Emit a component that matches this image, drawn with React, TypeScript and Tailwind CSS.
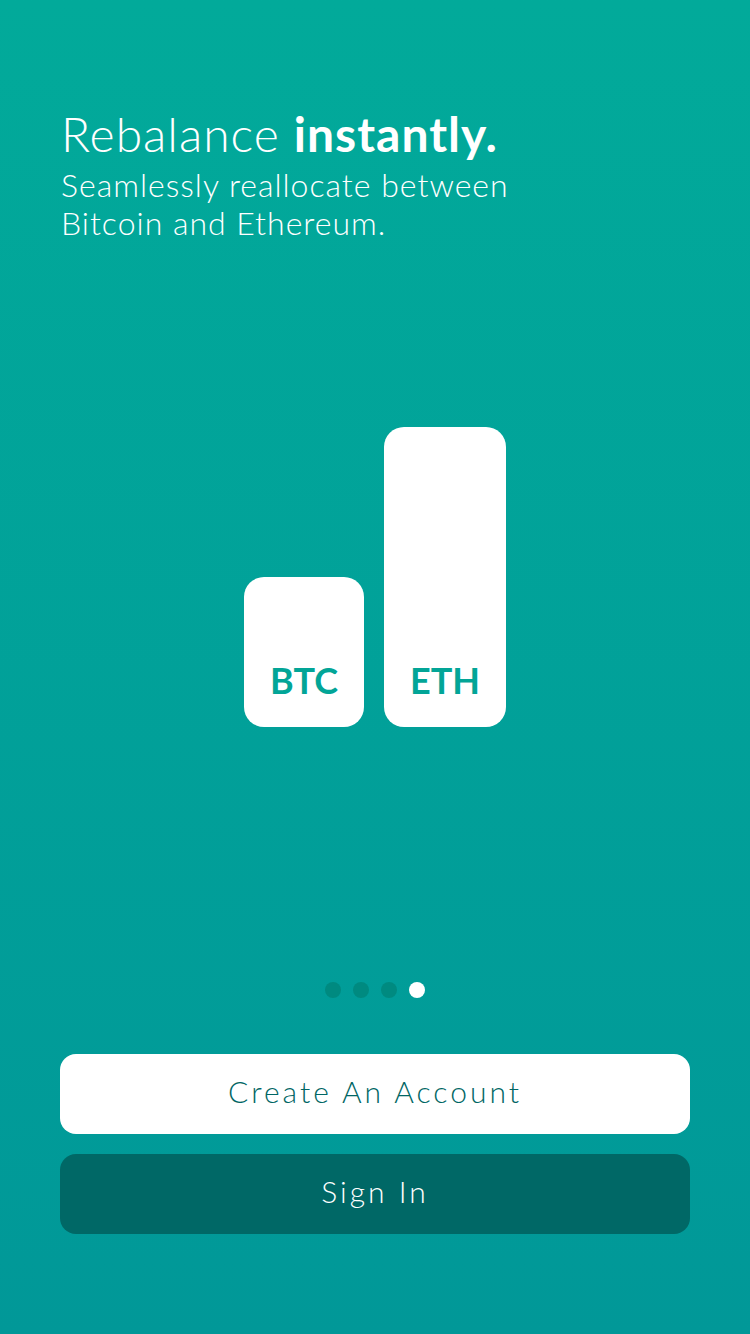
import React from "react";

const font = { fontFamily: "Lato, 'Noto Sans', sans-serif" };

function Bar(props: { label: string; height: string; width: string }) {
    return (
        <div
            className={`flex items-end justify-center rounded-[20px] bg-white pb-[29px] ${props.height} ${props.width}`}
        >
            <span className="text-[36px] font-bold leading-none text-[#02A597]">
                {props.label}
            </span>
        </div>
    );
}

export default function App() {
    return (
        <div
            className="flex flex-col h-[1334px] w-[750px] bg-gradient-to-b from-[#02AA9A] to-[#019898] text-white"
            style={font}
        >
            <div className="px-[61px] pt-[104px]">
                <h1 className="text-[48px] font-light leading-[60px] tracking-[1px]">
                    Rebalance <span className="font-bold">instantly.</span>
                </h1>
                <p className="text-[32px] font-light leading-[38px] mt-[2px] tracking-[1px]">
                    Seamlessly reallocate between
                    <br />
                    Bitcoin and Ethereum.
                </p>
            </div>

            <div className="flex justify-center items-end gap-5 mt-[185px] h-[300px]">
                <Bar label="BTC" height="h-[150px]" width="w-[120px]" />
                <Bar label="ETH" height="h-[300px]" width="w-[122px]" />
            </div>

            <div className="flex justify-center gap-3 mt-[255px]">
                <div className="w-4 h-4 rounded-full bg-[#008A80]" />
                <div className="w-4 h-4 rounded-full bg-[#008A80]" />
                <div className="w-4 h-4 rounded-full bg-[#008A80]" />
                <div className="w-4 h-4 rounded-full bg-white" />
            </div>

            <div className="flex flex-col gap-5 px-[60px] mt-[56px]">
                <button className="h-20 pb-[6px] rounded-2xl bg-white text-[30px] font-light tracking-[3px] text-[#006664]">
                    Create An Account
                </button>
                <button className="h-20 pb-[6px] rounded-2xl bg-[#006866] text-[30px] font-light tracking-[3px] text-white">
                    Sign In
                </button>
            </div>
        </div>
    );
}
